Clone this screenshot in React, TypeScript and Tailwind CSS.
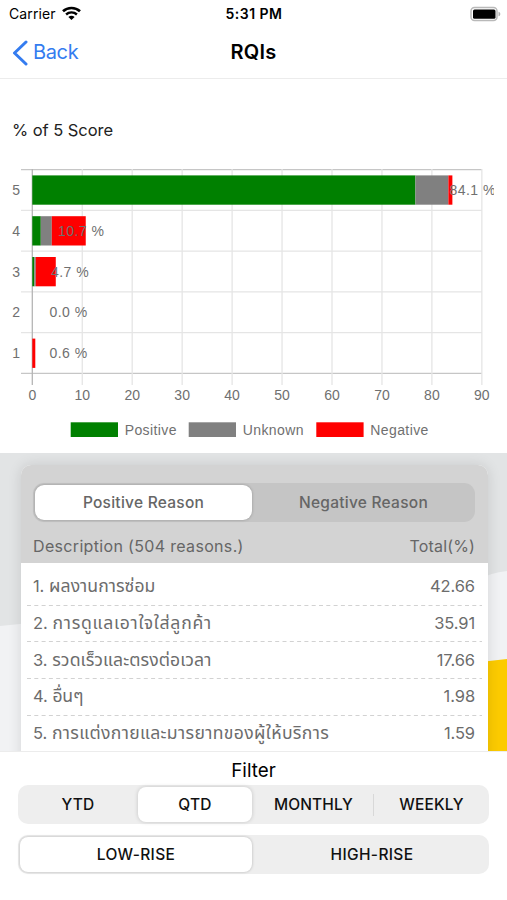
const scores = [
  { score: 5, y: 190, positive: 76.7, unknown: 6.6, negative: 0.8, label: "84.1 %", x: 449.5 },
  { score: 4, y: 230.8, positive: 1.7, unknown: 2.2, negative: 6.8, label: "10.7 %", x: 58 },
  { score: 3, y: 271.6, positive: 0.4, unknown: 0.3, negative: 4, label: "4.7 %", x: 51 },
  { score: 2, y: 312.4, positive: 0, unknown: 0, negative: 0, label: "0.0 %", x: 49.5 },
  { score: 1, y: 353.2, positive: 0, unknown: 0, negative: 0.6, label: "0.6 %", x: 49.5 },
];

const legend = [
  { label: "Positive", x: 70.7, color: "#008000" },
  { label: "Unknown", x: 188.7, color: "#808080" },
  { label: "Negative", x: 316.3, color: "#ff0000" },
];

const reasons = [
  { name: "ผลงานการซ่อม", total: "42.66", spacing: "tracking-[0.05px]" },
  { name: "การดูแลเอาใจใส่ลูกค้า", total: "35.91", spacing: "tracking-[0.75px]" },
  { name: "รวดเร็วและตรงต่อเวลา", total: "17.66", spacing: "tracking-[0.1px]" },
  { name: "อื่นๆ", total: "1.98", spacing: "tracking-[-0.2px]" },
  { name: "การแต่งกายและมารยาทของผู้ให้บริการ", total: "1.59", spacing: "tracking-[0.35px]" },
];

const LEFT = 32.3;
const UNIT = 4.995;

const StatusBar = () => (
  <div className="flex h-[27px] items-center justify-between pl-[9px] pr-[6px]">
    <div className="flex w-[110px] items-center gap-[6px] text-[14px]">
      <span className="tracking-[0.1px]">Carrier</span>
      <svg width="19" height="15" viewBox="0 0 19 15" fill="none">
        <path d="M1 5.3C5.7.8 13.3.8 18 5.3" stroke="#000" strokeWidth="2.6" />
        <path d="M4.1 8.5c3-2.8 7.8-2.8 10.8 0" stroke="#000" strokeWidth="2.4" />
        <path d="M6.4 10.9c1.7-1.6 4.5-1.6 6.2 0l-3.1 3.2Z" fill="#000" />
      </svg>
    </div>
    <span className="pr-[2px] text-[14px] font-semibold tracking-[0.5px]">5:31 PM</span>
    <div className="flex w-[110px] justify-end">
      <svg width="31" height="16" viewBox="0 0 31 16">
        <rect x="1" y="1.5" width="26" height="13" rx="3.5" fill="#fff" stroke="#b9b9b9" strokeWidth="1.5" />
        <rect x="3" y="3.4" width="22.5" height="9.3" rx="1.5" fill="#000" />
        <path d="M28.5 5.7c2.4.7 2.4 3.9 0 4.6Z" fill="#b0b0b0" />
      </svg>
    </div>
  </div>
);

const Header = () => (
  <header className="flex h-[52px] items-center border-b border-[#ececec] px-3">
    <div className="flex w-[120px] items-center gap-[6px] text-[20px] text-[#347cf0]">
      <svg width="16" height="26" viewBox="0 0 16 26" fill="none">
        <path d="M14 2 2.5 13 14 24" stroke="#347cf0" strokeWidth="3" strokeLinecap="round" strokeLinejoin="round" />
      </svg>
      <span className="-ml-px pb-px tracking-[-0.35px]">Back</span>
    </div>
    <h1 className="flex-1 pb-px text-center text-[20px] font-semibold tracking-[0.2px]">RQIs</h1>
    <div className="w-[120px]" />
  </header>
);

const ScoreChart = () => (
  <svg
    width="494"
    height="300"
    viewBox="0 150 494 300"
    fill="#707070"
    fontSize="14"
    className="block font-['Liberation_Sans',sans-serif]"
  >
    {[0, 1, 2, 3, 4, 5].map((i) => (
      <path
        key={i}
        d={`M21 ${169.7 + i * 40.75}H482`}
        stroke={i === 0 || i === 5 ? "#c6c6c6" : "#e5e5e5"}
        strokeWidth="1.3"
      />
    ))}
    {[0, 1, 2, 3, 4, 5, 6, 7, 8, 9].map((i) => (
      <g key={i}>
        <path
          d={`M${LEFT + i * 49.95} 169V385`}
          stroke={i === 0 ? "#b5b5b5" : "#e5e5e5"}
          strokeWidth="1.3"
        />
        <text x={LEFT + i * 49.95} y="399.5" textAnchor="middle">
          {i * 10}
        </text>
      </g>
    ))}
    {scores.map((s) => (
      <g key={s.score}>
        <text x="12.3" y={s.y + 5}>{s.score}</text>
        <rect x={LEFT} y={s.y - 14.6} width={s.positive * UNIT} height="29.3" fill="#008000" />
        <rect x={LEFT + s.positive * UNIT} y={s.y - 14.6} width={s.unknown * UNIT} height="29.3" fill="#808080" />
        <rect
          x={LEFT + (s.positive + s.unknown) * UNIT}
          y={s.y - 14.6}
          width={s.negative * UNIT}
          height="29.3"
          fill="#ff0000"
        />
      </g>
    ))}
    {scores.map((s) => (
      <text key={s.score} x={s.x} y={s.y + 4.9} letterSpacing="0.45">
        {s.label}
      </text>
    ))}
    {legend.map((l) => (
      <g key={l.label}>
        <rect x={l.x} y="422.3" width="47.3" height="14.7" fill={l.color} />
        <text x={l.x + 54} y="434.5" letterSpacing="0.4">
          {l.label}
        </text>
      </g>
    ))}
  </svg>
);

const Reasons = () => (
  <section className="relative h-[298px] overflow-hidden bg-[#f1f2f4]">
    <svg className="absolute inset-0" width="507" height="298" viewBox="0 0 507 298">
      <path d="M0 0H507V118Q490 120 480 126L20 171 0 173Z" fill="#e2e4e5" />
      <path d="M480 209 507 206V298H480Z" fill="#fccb00" />
    </svg>
    <div className="relative ml-[20.5px] mr-[19.5px] mt-3 h-[310px] overflow-hidden rounded-t-[10px] bg-white shadow-[0_0_14px_rgba(0,0,0,0.12)]">
      <div className="h-[98px] bg-[#d3d3d3] px-[12.5px] pt-[18px] text-[#666]">
        <div className="flex h-[39px] rounded-[11px] bg-[#c5c5c5] p-[2px] text-[15.5px] font-medium tracking-[0.25px]">
          <div className="flex w-[217px] items-center justify-center rounded-[9px] bg-white shadow-[0_0_3px_rgba(0,0,0,0.25)]">
            Positive Reason
          </div>
          <div className="flex flex-1 items-center justify-center pl-[2px]">Negative Reason</div>
        </div>
        <div className="flex h-[41px] items-center justify-between pt-[7px] text-[16px]">
          <span className="tracking-[0.33px]">Description (504 reasons.)</span>
          <span className="tracking-[0.15px]">Total(%)</span>
        </div>
      </div>
      <div className="px-[6px] pt-[6px] text-[16.5px] text-[#6c6c6c]">
        {reasons.map((r, i) => (
          <div key={r.name}>
            <div className="flex h-[35.65px] items-center justify-between px-[6.5px]">
              <div className="flex items-baseline gap-[5px] whitespace-nowrap">
                <span className="tracking-[-0.2px]">{i + 1}.</span>
                <span className={`text-[17.6px] leading-6 ${r.spacing}`}>{r.name}</span>
              </div>
              <span className="tracking-[-0.1px]">{r.total}</span>
            </div>
            <svg className="block" width="455" height="1">
              <path d="M0 .5H455" stroke="#d2d2d2" strokeDasharray="4 3.3" />
            </svg>
          </div>
        ))}
      </div>
    </div>
  </section>
);

const Filters = () => (
  <footer className="h-[149px] border-t border-[#ececec] bg-white px-[18px] pt-[5px]">
    <h2 className="h-[28px] text-center text-[18.8px] leading-[27px]">Filter</h2>
    <div className="flex h-[39px] items-center rounded-[10px] bg-[#eee] p-[2px] text-[15.5px] font-medium text-[#111]">
      <div className="w-[118px] pr-[2px] text-center tracking-[0.2px]">YTD</div>
      <div className="flex h-[35px] w-[114px] items-center justify-center rounded-[8px] bg-white tracking-[0.2px] shadow-[0_0_4px_rgba(0,0,0,0.18)]">
        QTD
      </div>
      <div className="w-[121px] pl-[2px] text-center tracking-[0.1px]">MONTHLY</div>
      <div className="h-[22px] w-px bg-[#d8d8d8]" />
      <div className="flex-1 pl-[2px] text-center tracking-[0.1px]">WEEKLY</div>
    </div>
    <div className="mt-[11px] flex h-[39px] items-center rounded-[10px] bg-[#eee] p-[2px] text-[15.5px] font-medium tracking-[0.35px] text-[#111]">
      <div className="flex h-[35px] w-[232px] items-center justify-center rounded-[8px] bg-white pt-px shadow-[0_0_3px_rgba(0,0,0,0.25)]">
        LOW-RISE
      </div>
      <div className="flex-1 pl-[5px] pt-px text-center">HIGH-RISE</div>
    </div>
  </footer>
);

const App = () => {
  return (
    <div className="flex h-[900px] w-[507px] flex-col overflow-hidden bg-white font-['Inter','Noto_Sans_Thai',sans-serif] text-black">
      <StatusBar />
      <Header />
      <div className="h-[374px]">
        <p className="h-[71px] pl-3 pt-[39px] text-[16.5px] leading-6 tracking-[-0.05px] text-[#222]">% of 5 Score</p>
        <ScoreChart />
      </div>
      <Reasons />
      <Filters />
    </div>
  );
};

export default App;
